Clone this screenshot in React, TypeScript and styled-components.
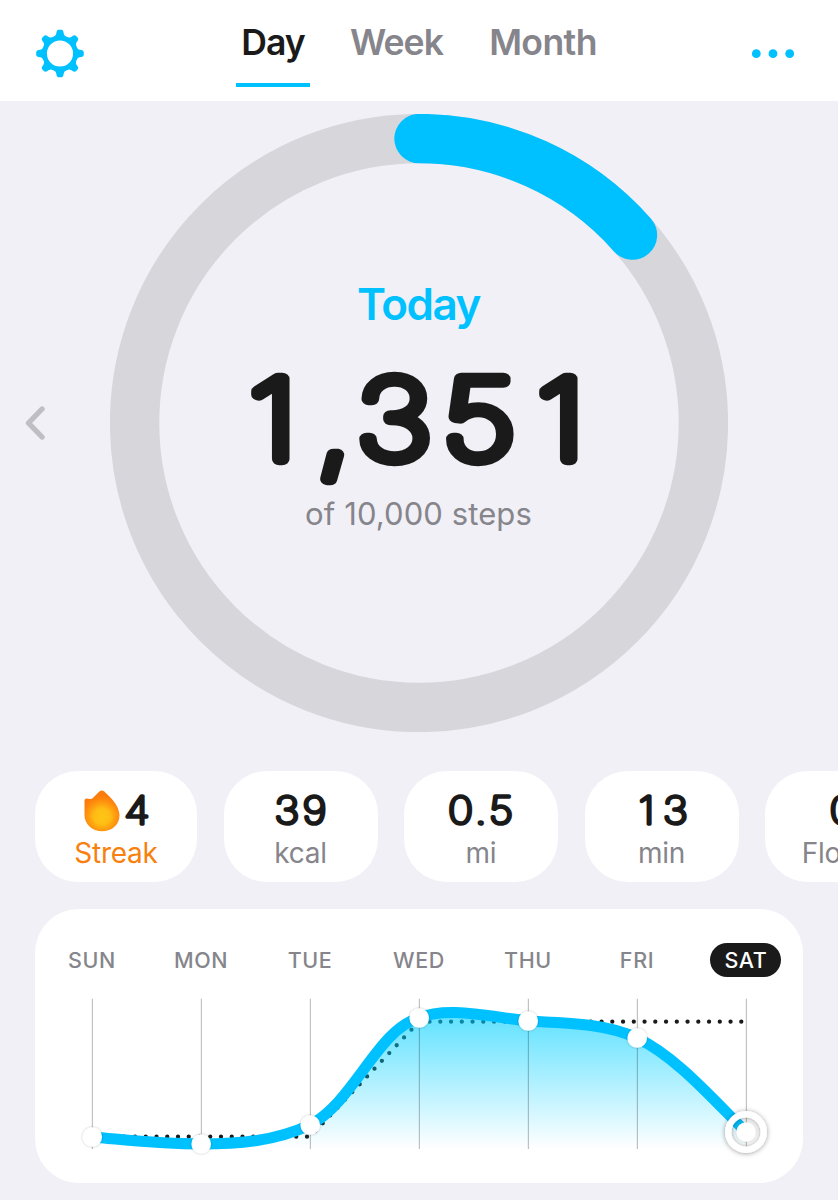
import React from "react";
import styled, { createGlobalStyle } from "styled-components";

const BLUE = "#00c1ff";
const INK = "#1a1a1a";
const GRAY = "#85858b";
const FONT = `Inter, "Liberation Sans", sans-serif`;

const GlobalStyle = createGlobalStyle`
  * { box-sizing: border-box; }
  body { margin: 0; background: #f1f0f6; }
`;

const Screen = styled.div`
  display: flex;
  flex-direction: column;
  width: 838px;
  height: 1200px;
  overflow: hidden;
  background: #f1f0f6;
  font-family: ${FONT};
  color: ${INK};
`;

const Header = styled.header`
  display: flex;
  justify-content: space-between;
  height: 101px;
  padding: 0 43px 0 35px;
  background: #fff;
`;

const IconButton = styled.button`
  display: flex;
  align-items: flex-start;
  padding: 28px 0 0;
  border: 0;
  background: none;
  svg { display: block; }
`;

const Tabs = styled.nav`
  display: flex;
  gap: 34px;
  padding-left: 3px;
`;

const Tab = styled.button<{ $active?: boolean; $width: number; $spacing: number }>`
  display: flex;
  justify-content: center;
  width: ${(p) => p.$width}px;
  height: 88px;
  padding: 21px 0 0;
  border: 0;
  background: ${(p) =>
    p.$active ? `linear-gradient(${BLUE}, ${BLUE}) 0 83px / 100% 4px no-repeat` : "none"};
  font: 600 35.6px/44px ${FONT};
  letter-spacing: ${(p) => p.$spacing}px;
  white-space: nowrap;
  color: ${(p) => (p.$active ? INK : GRAY)};
`;

const Hero = styled.section`
  display: grid;
  grid-template-columns: 110px 618px 110px;
  align-items: center;
  height: 618px;
  margin-top: 13px;
`;

const PrevButton = styled.button`
  display: flex;
  padding: 0 0 0 25px;
  border: 0;
  background: none;
`;

const Ring = styled.div`
  display: grid;
  width: 618px;
  height: 618px;
  > * { grid-area: 1 / 1; }
`;

const RingText = styled.div`
  display: flex;
  flex-direction: column;
  align-items: center;
  padding-top: 162px;
`;

const Today = styled.div`
  font-size: 44px;
  line-height: 56px;
  font-weight: 600;
  letter-spacing: -1.5px;
  padding-right: 1px;
  color: ${BLUE};
`;

const Goal = styled.div`
  font-size: 31px;
  line-height: 40px;
  letter-spacing: 0.1px;
  padding-right: 1px;
  color: ${GRAY};
`;

const NumberArt = styled.svg`
  display: block;
  overflow: visible;
  font-family: ${FONT};
  font-weight: 100;
  fill: ${INK};
  stroke: ${INK};
  stroke-linejoin: round;
  stroke-linecap: round;
  text { vector-effect: non-scaling-stroke; }
`;

const Stats = styled.section`
  display: flex;
  gap: 26.5px;
  height: 111px;
  margin: 39px 0 0 35px;
`;

const StatCard = styled.div<{ $wide?: boolean }>`
  display: flex;
  flex: none;
  flex-direction: column;
  align-items: center;
  width: ${(p) => (p.$wide ? 162 : 154)}px;
  padding-top: 19px;
  border-radius: 43px;
  background: #fff;
`;

const StatValue = styled.div<{ $shift?: number }>`
  display: flex;
  align-items: flex-start;
  gap: 4px;
  height: 42px;
  padding-left: ${(p) => p.$shift ?? 0}px;
`;

const StatLabel = styled.div<{ $accent?: boolean }>`
  font-size: 28px;
  line-height: 42px;
  letter-spacing: -0.25px;
  color: ${(p) => (p.$accent ? "#f8800f" : GRAY)};
`;

const ChartCard = styled.section`
  width: 768px;
  height: 274px;
  margin: 27px 0 0 35px;
  padding-top: 34px;
  border-radius: 44px;
  background: #fff;
`;

const Days = styled.div`
  display: grid;
  grid-template-columns: repeat(7, 109px);
  justify-items: center;
  margin-left: 2px;
`;

const Day = styled.span<{ $active?: boolean }>`
  display: flex;
  align-items: center;
  justify-content: center;
  width: 71px;
  height: 34px;
  border-radius: 17px;
  background: ${(p) => (p.$active ? INK : "none")};
  color: ${(p) => (p.$active ? "#fff" : GRAY)};
  font-size: 21.5px;
  font-weight: 500;
  letter-spacing: 0.6px;
  padding-left: 1px;
`;

const Plot = styled.svg`
  display: block;
  margin-top: 13px;
`;

function RoundedNumber({
  text, width, height, size, stroke, stretch, x, y,
}: {
  text: string; width: number; height: number; size: number;
  stroke: number; stretch: number; x: number[]; y: string;
}) {
  return (
    <NumberArt width={width} height={height}>
      <text
        transform={`scale(${stretch} 1)`}
        x={x.map((v) => (v / stretch).toFixed(2)).join(" ")}
        y={y}
        fontSize={size}
        strokeWidth={stroke}
        textAnchor="middle"
      >
        {text}
      </text>
    </NumberArt>
  );
}

function Gear() {
  return (
    <svg width="50" height="52" viewBox="-25 -25.5 50 52" fill={BLUE}>
      <circle r="15.5" fill="none" stroke={BLUE} strokeWidth="4.8" />
      {[0, 45, 90, 135, 180, 225, 270, 315].map((a) => (
        <path
          key={a}
          transform={`rotate(${a})`}
          d="M-6.8-16.2C-4.4-17.6-3.8-18.9-3.5-21.2C-3.2-23.2-2.2-23.8-1-23.8H1C2.2-23.8 3.2-23.2 3.5-21.2C3.8-18.9 4.4-17.6 6.8-16.2Z"
        />
      ))}
    </svg>
  );
}

function Flame() {
  return (
    <svg width="36" height="42" viewBox="0 0 36 42">
      <defs>
        <radialGradient id="flame" gradientUnits="userSpaceOnUse" cx="18" cy="26.5" r="21">
          <stop offset="0" stopColor="#ffc516" />
          <stop offset="0.38" stopColor="#ffbd14" />
          <stop offset="0.6" stopColor="#ffa010" />
          <stop offset="0.85" stopColor="#fe850d" />
          <stop offset="1" stopColor="#fb7c0c" />
        </radialGradient>
      </defs>
      <path
        fill="url(#flame)"
        d="M.5 10.5Q.5 8.4 2.6 8.4L5.6 9Q7.4 9.4 8.8 8L15.4 1.6Q17.8-.6 20.3 1.6C27 8 35.5 16 35.5 25.5C35.5 34.5 28 41.3 18 41.3C8 41.3 .5 34 .5 25Z"
      />
    </svg>
  );
}

const stats = [
  { value: "39", label: "kcal", x: [40, 67.5] },
  { value: "0.5", label: "mi", x: [33.5, 53.7, 74] },
  { value: "13", label: "min", x: [38.7, 67.5] },
  { value: "0", label: "Floors", x: [54] },
];

const columns = [57, 166, 275, 384, 493, 602, 711];
const heights = [139, 146, 127, 20, 23, 40, 134];
const curve =
  "M57 139C93 142 125 146 166 146C205 146 240 143 275 127C319 104 343 31 384 20C411 9 445 17 493 23C530 25 570 25 602 40C640 58 675 98 711 134";

export default function App() {
  return (
    <>
      <GlobalStyle />
      <Screen>
        <Header>
          <IconButton aria-label="Settings"><Gear /></IconButton>
          <Tabs>
            <Tab $active $width={74} $spacing={-1}>Day</Tab>
            <Tab $width={105} $spacing={-0.9}>Week</Tab>
            <Tab $width={120} $spacing={-0.6}>Month</Tab>
          </Tabs>
          <IconButton aria-label="More">
            <svg width="44" height="52" fill={BLUE}>
              <circle cx="5.3" cy="25.7" r="4.4" />
              <circle cx="22" cy="25.7" r="4.4" />
              <circle cx="38.7" cy="25.7" r="4.4" />
            </svg>
          </IconButton>
        </Header>

        <Hero>
          <PrevButton aria-label="Previous day">
            <svg width="22" height="34" fill="none" stroke="#bfbec3" strokeWidth="5.4" strokeLinecap="round" strokeLinejoin="round">
              <path d="M17 3L3.5 17L17 31" />
            </svg>
          </PrevButton>
          <Ring>
            <svg width="618" height="618" fill="none" strokeWidth="49.4">
              <circle cx="309" cy="309" r="284.4" stroke="#d7d6db" />
              <circle
                cx="309" cy="309" r="284.4" stroke={BLUE} strokeLinecap="round"
                pathLength="10000" strokeDasharray="1351 10000" transform="rotate(-90 309 309)"
              />
            </svg>
            <RingText>
              <Today>Today</Today>
              <RoundedNumber
                text="1,351" width={360} height={162} size={110} stroke={13.6} stretch={1.18}
                x={[34, 95.2, 155.3, 240, 322]} y="127.5 131.5 127.5 127.5 127.5"
              />
              <Goal>of 10,000 steps</Goal>
            </RingText>
          </Ring>
        </Hero>

        <Stats>
          <StatCard $wide>
            <StatValue $shift={2}>
              <Flame />
              <RoundedNumber text="4" width={27} height={42} size={38} stroke={3.9} stretch={1.12} x={[13]} y="34.2" />
            </StatValue>
            <StatLabel $accent>Streak</StatLabel>
          </StatCard>
          {stats.map((s) => (
            <StatCard key={s.label}>
              <StatValue>
                <RoundedNumber text={s.value} width={108} height={42} size={38} stroke={3.9} stretch={1.12} x={s.x} y="34.2" />
              </StatValue>
              <StatLabel>{s.label}</StatLabel>
            </StatCard>
          ))}
        </Stats>

        <ChartCard>
          <Days>
            {["SUN", "MON", "TUE", "WED", "THU", "FRI", "SAT"].map((d) => (
              <Day key={d} $active={d === "SAT"}>{d}</Day>
            ))}
          </Days>
          <Plot width="768" height="190" viewBox="0 -8 768 190">
            <defs>
              <linearGradient id="area" gradientUnits="userSpaceOnUse" x1="0" y1="14" x2="0" y2="151">
                <stop offset="0" stopColor="#00d0ff" stopOpacity="0.64" />
                <stop offset="1" stopColor="#00d0ff" stopOpacity="0" />
              </linearGradient>
              <filter id="soft" x="-50%" y="-50%" width="200%" height="200%">
                <feDropShadow dx="0" dy="0" stdDeviation="1" floodColor="#000" floodOpacity="0.3" />
              </filter>
              <filter id="halo" x="-50%" y="-50%" width="200%" height="200%">
                <feDropShadow dx="0" dy="0.5" stdDeviation="2.5" floodColor="#000" floodOpacity="0.4" />
              </filter>
            </defs>
            <path
              d="M57 138.7H275L384 23.7H711" fill="none" stroke="#1a1a1a" strokeWidth="4.3"
              strokeLinecap="round" strokeDasharray="0 10.75"
            />
            <path d={`${curve}V151H57Z`} fill="url(#area)" />
            {columns.map((x) => (
              <path key={x} d={`M${x + 0.4} .8V151`} stroke="#000" strokeOpacity="0.24" strokeWidth="1.2" />
            ))}
            <path d={curve} fill="none" stroke={BLUE} strokeWidth="11" />
            {columns.map((x, i) => (
              <circle key={x} cx={x + 0.2} cy={heights[i]} r="9.8" fill="#fff" filter="url(#soft)" />
            ))}
            <circle cx="711" cy="134" r="17.8" fill="none" stroke="#fff" strokeWidth="6.4" filter="url(#halo)" />
          </Plot>
        </ChartCard>
      </Screen>
    </>
  );
}
